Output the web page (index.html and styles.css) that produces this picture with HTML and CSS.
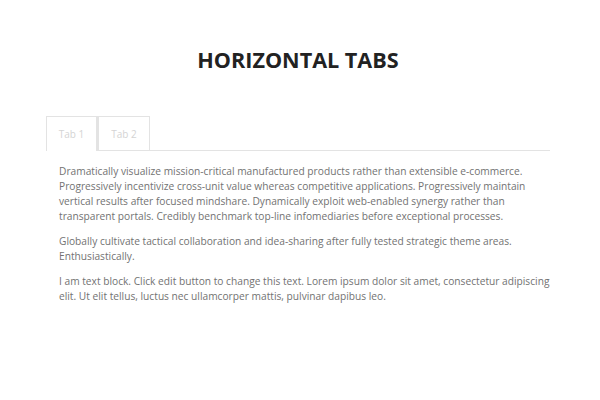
FILE: index.html
```html
<!DOCTYPE html>
<html lang="en">
<head>
<meta charset="utf-8">
<title>Horizontal Tabs</title>
<link rel="stylesheet" href="styles.css">
</head>
<body>
<main class="page">
  <h1 class="title">HORIZONTAL TABS</h1>
  <section class="tabs">
    <div class="tab-list">
      <div class="tab active">Tab 1</div>
      <div class="tab">Tab 2</div>
      <div class="tab-fill"></div>
    </div>
    <div class="tab-panel">
      <p>Dramatically visualize mission-critical manufactured products rather than extensible e-commerce. Progressively incentivize cross-unit value whereas competitive applications. Progressively maintain vertical results after focused mindshare. Dynamically exploit web-enabled synergy rather than transparent portals. Credibly benchmark top-line infomediaries before exceptional processes.</p>
      <p>Globally cultivate tactical collaboration and idea-sharing after fully tested strategic theme areas. Enthusiastically.</p>
      <p>I am text block. Click edit button to change this text. Lorem ipsum dolor sit amet, consectetur adipiscing elit. Ut elit tellus, luctus nec ullamcorper mattis, pulvinar dapibus leo.</p>
    </div>
  </section>
</main>
</body>
</html>
```
FILE: styles.css
```css
* { box-sizing: border-box; }
html, body { margin: 0; background: #fff; }
body { font-family: "Open Sans", "Liberation Sans", sans-serif; }
.page { width: 600px; height: 400px; padding: 44px 50px 0 46px; }
.title {
  margin: 0;
  text-align: center;
  font-size: 21.6px;
  line-height: 32px;
  font-weight: 700;
  color: #222;
}
.tabs { margin-top: 40px; }
.tab-list { display: flex; height: 35px; }
.tab {
  border: 1px solid #e3e3e3;
  border-bottom: none;
  font-size: 10px;
  color: #d4d4d4;
  padding-top: 10px;
  height: 35px;
  white-space: nowrap;
  text-align: center;
}
.tab.active { width: 51px; }
.tab:not(.active) { width: 53px; border-bottom: 1px solid #e3e3e3; border-left-width: 2px; }
.tab-fill { flex: 1; border-bottom: 1px solid #e3e3e3; }
.tab-panel { padding: 13px 0 0 13px; }
.tab-panel p {
  margin: 0 0 10px;
  font-size: 10.2px;
  line-height: 15px;
  color: #727272;
}
```
